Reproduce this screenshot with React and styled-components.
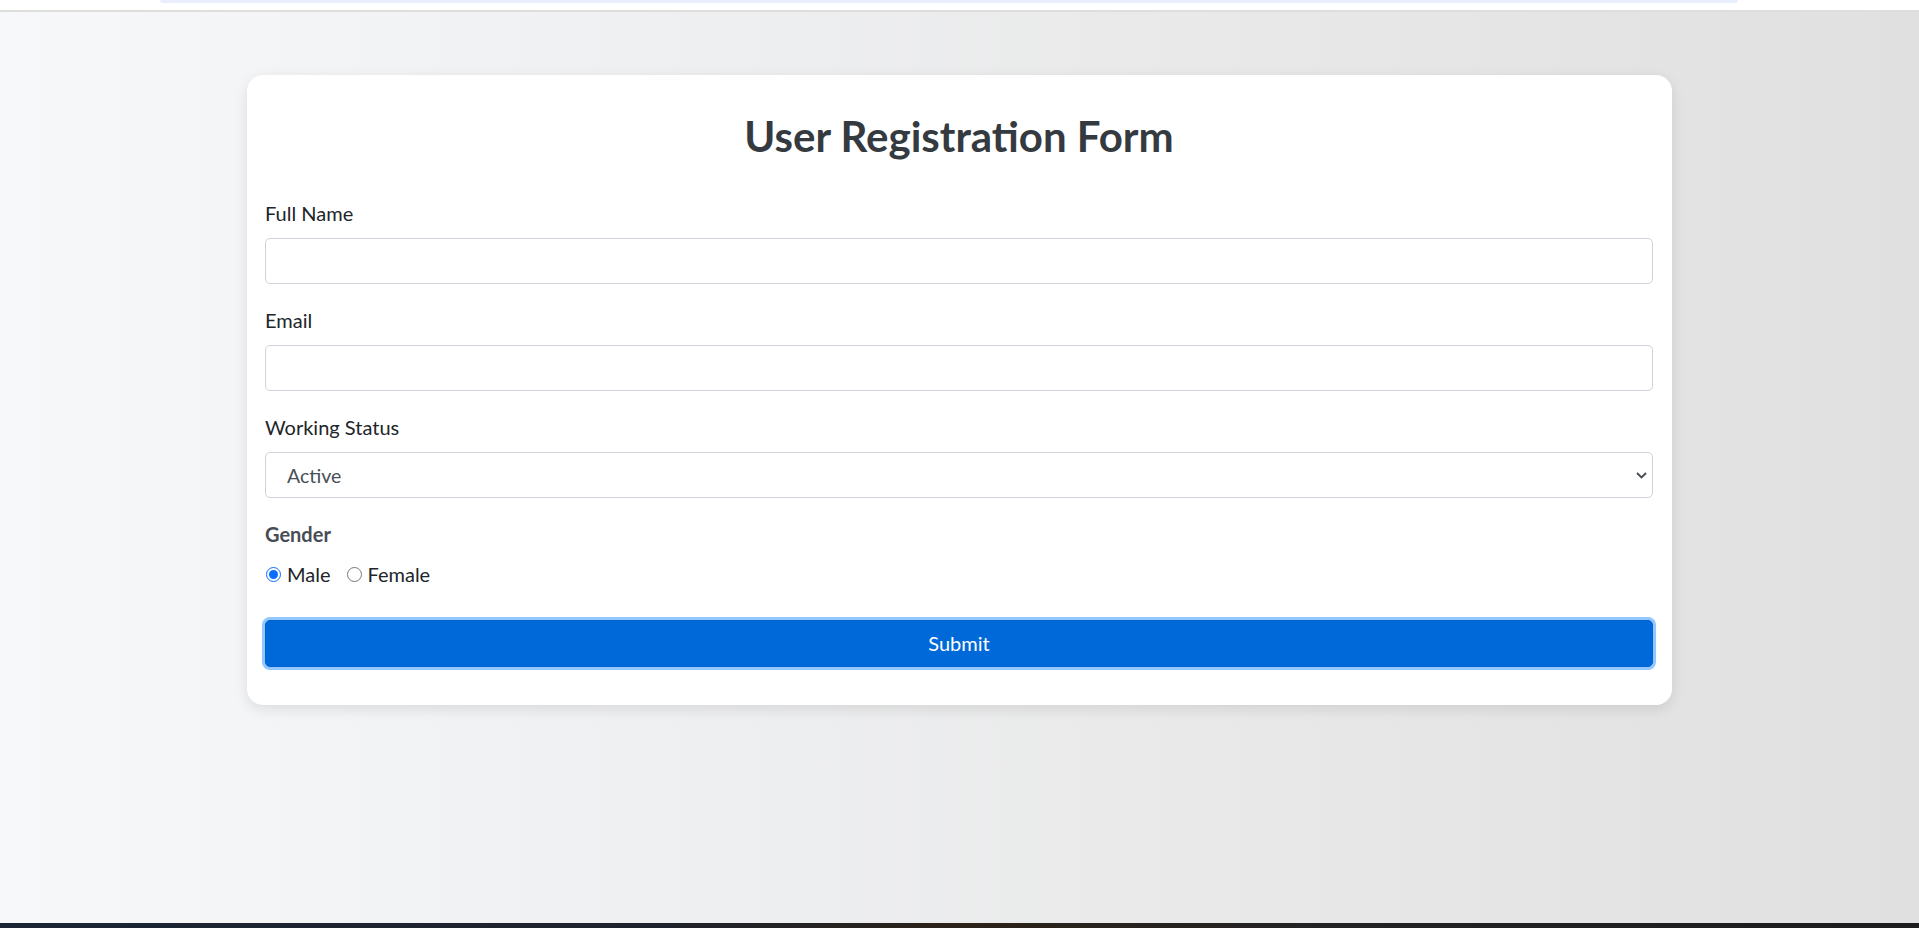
import styled, { createGlobalStyle } from "styled-components";
import { useState } from "react";

const GlobalStyle = createGlobalStyle`
  html, body {
    margin: 0;
    padding: 0;
  }
  body {
    font-family: Lato, "Liberation Sans", sans-serif;
    color: #212529;
  }
  * {
    box-sizing: border-box;
  }
`;

const Screen = styled.div`
  display: flex;
  flex-direction: column;
  height: 100vh;
`;

const BrowserStrip = styled.div`
  height: 12px;
  flex-shrink: 0;
  background: #ffffff;
  border-bottom: 2px solid #dedfdc;
  display: flex;
`;

const StripTab = styled.div`
  width: 1578px;
  height: 3px;
  margin-left: 160px;
  background: #e8effb;
  border-radius: 0 0 8px 8px;
`;

const Page = styled.main`
  flex: 1;
  background: linear-gradient(to right, #f7f8fa, #e0e0e0);
  padding-top: 63px;
`;

const Taskbar = styled.div`
  height: 5px;
  flex-shrink: 0;
  background: linear-gradient(to right, #1b2535, #1f222b 35%, #2b2219 50%, #222225 70%, #1c1c1f);
`;

const Card = styled.div`
  width: 1425px;
  margin: 0 auto;
  background: #ffffff;
  border-radius: 16px;
  box-shadow: 0 4px 14px rgba(0, 0, 0, 0.1);
  padding: 37px 19px 38px 18px;
`;

const Title = styled.h1`
  margin: 0 0 40px;
  text-align: center;
  font-size: 42px;
  line-height: 48px;
  font-weight: 700;
  color: #343a40;
`;

const Group = styled.div`
  margin-bottom: 23px;
`;

const Label = styled.label`
  display: block;
  font-size: 20px;
  line-height: 27px;
  margin-bottom: ${({ $gap }) => $gap ?? 11}px;
  font-weight: ${({ $bold }) => ($bold ? 700 : 400)};
  color: ${({ $bold }) => ($bold ? "#474d54" : "#212529")};
`;

const TextInput = styled.input`
  display: block;
  width: 100%;
  height: 46px;
  padding: 0 12px;
  font-family: inherit;
  font-size: 20px;
  color: #495057;
  background: #ffffff;
  border: 1px solid #ced4da;
  border-radius: 5px;
  outline: none;
`;

const SelectWrap = styled.div`
  position: relative;
`;

const Select = styled.select`
  display: block;
  width: 100%;
  height: 46px;
  padding: 0 30px 0 21px;
  font-family: inherit;
  font-size: 19.5px;
  color: #495057;
  background: #ffffff;
  border: 1px solid #ced4da;
  border-radius: 5px;
  appearance: none;
  outline: none;
`;

const Chevron = styled.svg`
  position: absolute;
  right: 6px;
  top: 20px;
  pointer-events: none;
`;

const RadioRow = styled.div`
  display: flex;
  align-items: center;
  gap: 15px;
  margin-bottom: 32px;
`;

const RadioOption = styled.label`
  display: flex;
  align-items: center;
  font-size: 20px;
  line-height: 27px;
  color: #212529;
`;

const Radio = styled.input`
  width: 15px;
  height: 15px;
  margin: 0 6px 0 1px;
  accent-color: #0a6cff;
`;

const SubmitButton = styled.button`
  display: block;
  width: 100%;
  padding: 9px 12px;
  font-family: inherit;
  font-size: 20px;
  line-height: 27px;
  color: #ffffff;
  background: #0069d9;
  border: 1px solid #0062cc;
  border-radius: 5px;
  box-shadow: 0 0 0 3px rgba(38, 143, 255, 0.5);
  cursor: pointer;
`;

export default function App() {
  const [gender, setGender] = useState("male");
  const [status, setStatus] = useState("active");

  function handleSubmit(event) {
    event.preventDefault();
  }

  return (
    <>
      <GlobalStyle />
      <Screen>
        <BrowserStrip>
          <StripTab />
        </BrowserStrip>
        <Page>
          <Card>
            <Title>User Registration Form</Title>
            <form onSubmit={handleSubmit}>
              <Group>
                <Label htmlFor="fullName">Full Name</Label>
                <TextInput id="fullName" name="fullName" type="text" />
              </Group>
              <Group>
                <Label htmlFor="email">Email</Label>
                <TextInput id="email" name="email" type="email" />
              </Group>
              <Group>
                <Label htmlFor="status">Working Status</Label>
                <SelectWrap>
                  <Select
                    id="status"
                    value={status}
                    onChange={(e) => setStatus(e.target.value)}
                  >
                    <option value="active">Active</option>
                    <option value="inactive">Inactive</option>
                  </Select>
                  <Chevron width="11" height="7" viewBox="0 0 11 7">
                    <path
                      d="M1 1l4.5 4.5L10 1"
                      fill="none"
                      stroke="#444a52"
                      strokeWidth="1.8"
                    />
                  </Chevron>
                </SelectWrap>
              </Group>
              <Label as="div" $bold $gap={13}>
                Gender
              </Label>
              <RadioRow>
                <RadioOption>
                  <Radio
                    type="radio"
                    name="gender"
                    value="male"
                    checked={gender === "male"}
                    onChange={() => setGender("male")}
                  />
                  Male
                </RadioOption>
                <RadioOption>
                  <Radio
                    type="radio"
                    name="gender"
                    value="female"
                    checked={gender === "female"}
                    onChange={() => setGender("female")}
                  />
                  Female
                </RadioOption>
              </RadioRow>
              <SubmitButton type="submit">Submit</SubmitButton>
            </form>
          </Card>
        </Page>
        <Taskbar />
      </Screen>
    </>
  );
}
